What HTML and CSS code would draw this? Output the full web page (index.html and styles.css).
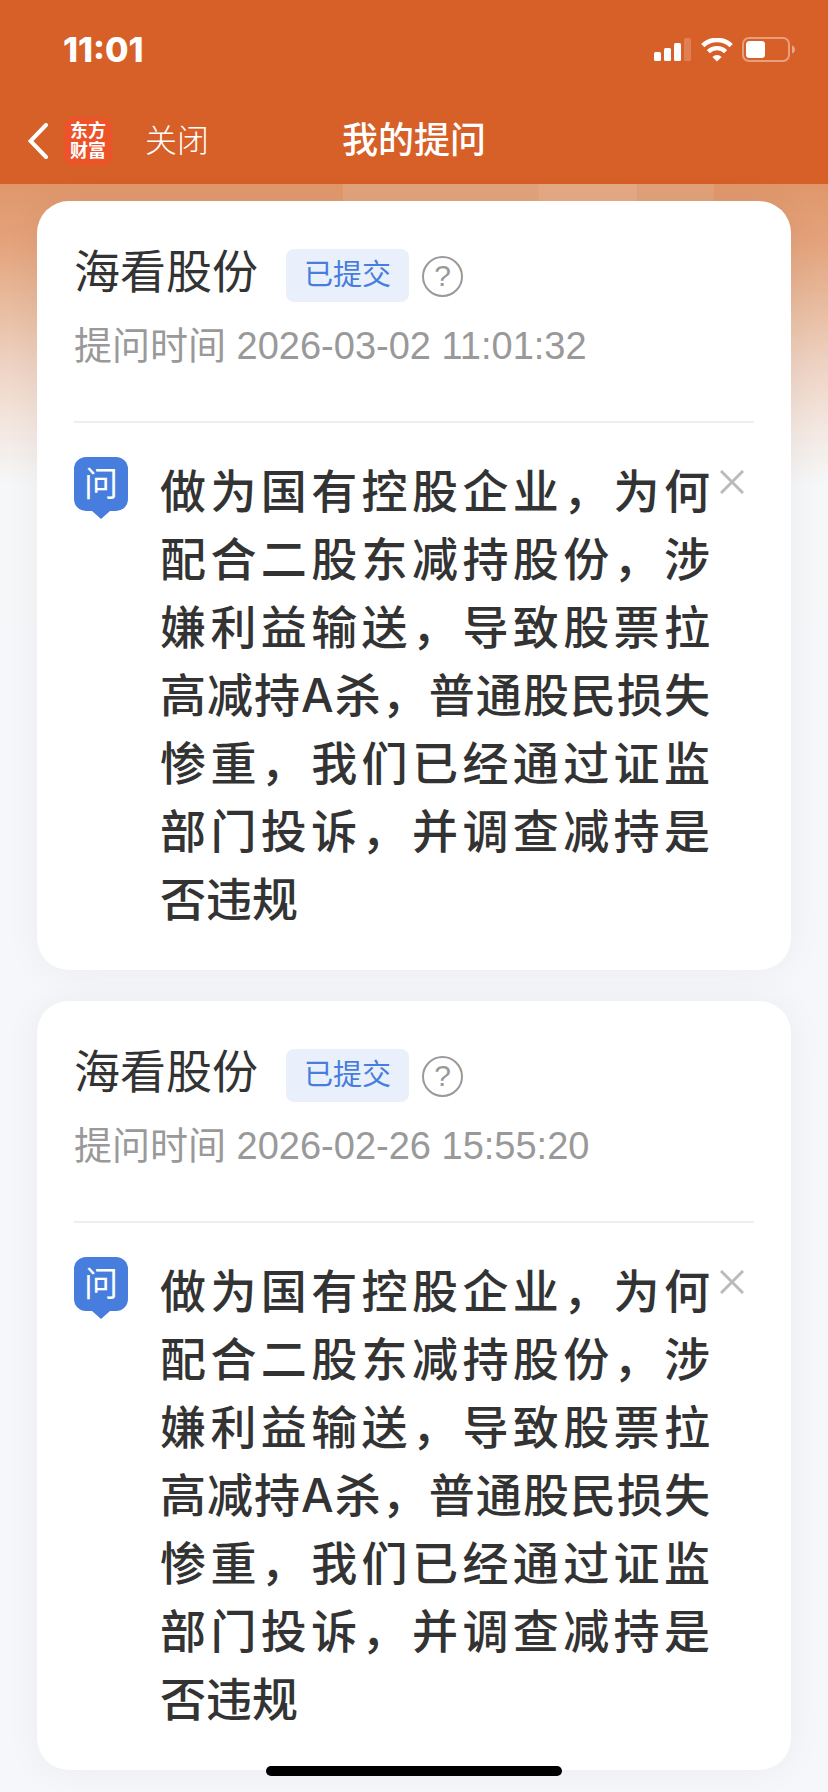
FILE: index.html
```html
<!DOCTYPE html>
<html lang="zh-CN">
<head>
    <meta charset="UTF-8">
    <meta name="viewport" content="width=device-width, initial-scale=1.0">
    <title>我的提问</title>
    <link rel="stylesheet" href="styles.css">
</head>
<body>
    <header class="header">
        <div class="status-bar">
            <span class="time">11:01</span>
            <div class="status-icons">
                <svg width="38" height="24" viewBox="0 0 38 24" fill="#fff">
                    <rect x="0" y="14" width="7" height="9" rx="1.5"/>
                    <rect x="10" y="10" width="7" height="13" rx="1.5"/>
                    <rect x="20" y="5" width="7" height="18" rx="1.5"/>
                    <rect x="30" y="0" width="7" height="23" rx="1.5" opacity=".2"/>
                </svg>
                <svg width="32" height="24" viewBox="0 0 32 24" fill="none" stroke="#fff">
                    <path d="M1.8 7.7a20.4 20.4 0 0 1 28.4 0" stroke-width="4.6"/>
                    <path d="M7.4 13.7a12.2 12.2 0 0 1 17.2 0" stroke-width="4.4"/>
                    <path d="M16 23.6l-4.6-4.7a6.6 6.6 0 0 1 9.2 0z" fill="#fff" stroke="none"/>
                </svg>
                <svg width="54" height="26" viewBox="0 0 54 26">
                    <rect x="1" y="1" width="46" height="23" rx="6" fill="none" stroke="#fff" stroke-opacity=".4" stroke-width="2"/>
                    <rect x="4" y="4" width="19" height="17" rx="3.5" fill="#fff"/>
                    <path d="M50 8.5c4 1 4 7 0 8z" fill="#fff" opacity=".45"/>
                </svg>
            </div>
        </div>
        <nav class="nav-bar">
            <div class="nav-left">
                <a class="back" href="#" aria-label="返回">
                    <svg width="20" height="36" viewBox="0 0 20 36" fill="none" stroke="#fff" stroke-width="4" stroke-linecap="round">
                        <path d="M18 2L2.5 18 18 34"/>
                    </svg>
                </a>
                <a class="logo" href="#"><span>东方</span><span>财富</span></a>
                <button class="close-page" type="button">关闭</button>
            </div>
            <h1>我的提问</h1>
        </nav>
    </header>

    <main class="list">
        <article class="card">
            <div class="card-head">
                <div class="title-row">
                    <h2>海看股份</h2>
                    <span class="tag">已提交</span>
                    <button class="help" type="button" aria-label="帮助">?</button>
                </div>
                <p class="ask-time">提问时间 2026-03-02 11:01:32</p>
            </div>
            <div class="question">
                <span class="ask-icon">问</span>
                <p class="question-text">做为国有控股企业，为何配合二股东减持股份，涉嫌利益输送，导致股票拉高减持A杀，普通股民损失惨重，我们已经通过证监部门投诉，并调查减持是否违规</p>
                <button class="delete" type="button" aria-label="删除">
                    <svg width="24" height="24" viewBox="0 0 24 24" stroke="#bbb" stroke-width="3">
                        <path d="M1 1l22 22M23 1L1 23"/>
                    </svg>
                </button>
            </div>
        </article>

        <article class="card">
            <div class="card-head">
                <div class="title-row">
                    <h2>海看股份</h2>
                    <span class="tag">已提交</span>
                    <button class="help" type="button" aria-label="帮助">?</button>
                </div>
                <p class="ask-time">提问时间 2026-02-26 15:55:20</p>
            </div>
            <div class="question">
                <span class="ask-icon">问</span>
                <p class="question-text">做为国有控股企业，为何配合二股东减持股份，涉嫌利益输送，导致股票拉高减持A杀，普通股民损失惨重，我们已经通过证监部门投诉，并调查减持是否违规</p>
                <button class="delete" type="button" aria-label="删除">
                    <svg width="24" height="24" viewBox="0 0 24 24" stroke="#bbb" stroke-width="3">
                        <path d="M1 1l22 22M23 1L1 23"/>
                    </svg>
                </button>
            </div>
        </article>
    </main>

    <div class="home-indicator"></div>
</body>
</html>
```
FILE: styles.css
```css
* {
    box-sizing: border-box;
}
body {
    margin: 0;
    background-color: #f6f7fa;
    font-family: "Liberation Sans", "Noto Sans CJK SC", sans-serif;
    color: #333;
}
h1, h2, p {
    margin: 0;
    font-weight: normal;
}
button {
    padding: 0;
    border: none;
    background: none;
    font-family: inherit;
    cursor: pointer;
}
a {
    color: inherit;
    text-decoration: none;
}
svg {
    display: block;
}

/* 顶部 */
.header {
    background-color: #d75f28;
    color: #fff;
}
.status-bar {
    display: flex;
    justify-content: space-between;
    align-items: center;
    height: 99px;
    padding: 0 32px 0 63px;
}
.time {
    font-family: Inter, sans-serif;
    font-size: 34px;
    font-weight: 800;
}
.status-icons {
    display: flex;
    align-items: center;
    gap: 9px;
}
.nav-bar {
    display: grid;
    grid-template-columns: 1fr auto 1fr;
    align-items: center;
    height: 85px;
    padding: 0 28px 2px;
}
.nav-left {
    display: flex;
    align-items: center;
}
.logo {
    display: flex;
    flex-direction: column;
    align-items: center;
    justify-content: center;
    width: 48px;
    height: 48px;
    margin: 0 33px 0 16px;
    border-radius: 10px;
    background-color: #ec5328;
    font-size: 18px;
    font-weight: 700;
    line-height: 20px;
}
.close-page {
    color: #fff;
    font-size: 32px;
    font-weight: 300;
    line-height: 48px;
}
.nav-bar h1 {
    font-size: 36px;
    font-weight: 500;
    line-height: 48px;
}

/* 提问列表 */
.list {
    display: flex;
    flex-direction: column;
    gap: 31px;
    padding: 17px 37px 22px;
    /* 横幅上的浅色方块 + 渐变底色 */
    background:
        linear-gradient(90deg, transparent 343px, rgba(232, 190, 160, 0.3) 343px, rgba(232, 190, 160, 0.3) 539px, rgba(236, 196, 168, 0.4) 539px, rgba(236, 196, 168, 0.4) 637px, rgba(228, 182, 148, 0.3) 637px, rgba(228, 182, 148, 0.3) 714px, transparent 714px) 0 0 / 100% 50px no-repeat,
        linear-gradient(#e0976a, #e4a37c 60px, #e8bb9e 120px, #eed2c2 180px, #f3e6df 240px, #f6f7f8 300px, #f6f7fa 500px);
}
.card {
    padding: 35px 37px 37px;
    border-radius: 32px;
    background-color: #fff;
    box-shadow: 0 0 37px rgba(0, 0, 0, 0.05);
}
.card-head {
    padding-bottom: 47px;
    border-bottom: 2px solid #eee;
}
.title-row {
    display: flex;
    align-items: center;
    height: 72px;
}
.title-row h2 {
    font-size: 46px;
    line-height: 72px;
}
.tag {
    margin: 6px 13px 0 28px;
    padding: 0 18px;
    border-radius: 8px;
    background-color: #eaf0fb;
    color: #477ddc;
    font-size: 29px;
    line-height: 53px;
}
.help {
    width: 41px;
    height: 41px;
    margin-top: 8px;
    border: 2px solid #999;
    border-radius: 50%;
    color: #999;
    font-size: 30px;
    line-height: 36px;
}
.ask-time {
    margin-top: 10px;
    color: #999;
    font-size: 38px;
    line-height: 56px;
}
.question {
    display: flex;
    align-items: flex-start;
    padding-top: 34px;
}
.ask-icon {
    position: relative;
    flex: none;
    width: 54px;
    height: 54px;
    margin-right: 32px;
    border-radius: 12px;
    background-color: #477ddc;
    color: #fff;
    font-size: 34px;
    line-height: 54px;
    text-align: center;
}
/* 气泡的小尖角 */
.ask-icon::after {
    content: "";
    position: absolute;
    top: 100%;
    left: 18px;
    border: 9px solid transparent;
    border-top: 8px solid #477ddc;
    border-bottom: none;
}
.question-text {
    flex: 1;
    font-family: Inter, "Noto Sans CJK SC", sans-serif;
    font-size: 46px;
    font-weight: 500;
    line-height: 68px;
    text-align: justify;
}
.delete {
    margin: 13px 10px 0;
}

.home-indicator {
    position: fixed;
    bottom: 16px;
    left: 50%;
    width: 296px;
    height: 10px;
    border-radius: 5px;
    background-color: #000;
    transform: translateX(-50%);
}
```
